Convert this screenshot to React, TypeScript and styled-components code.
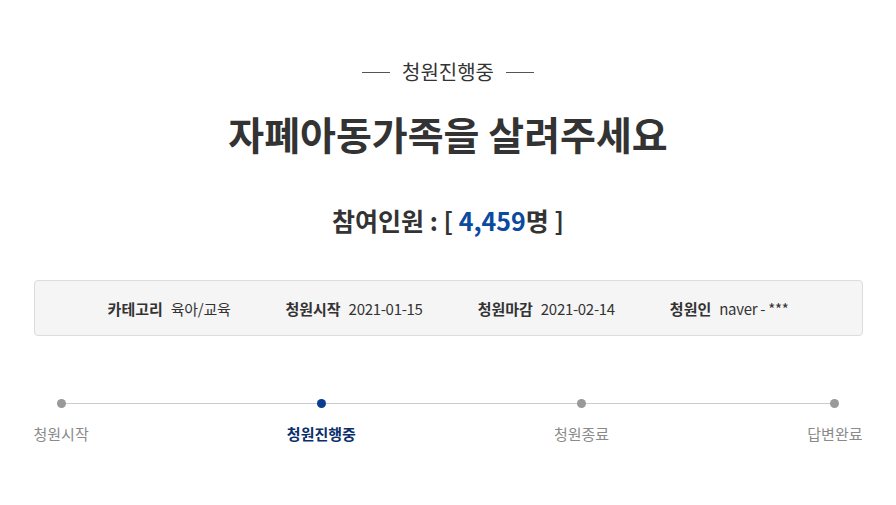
import React from 'react';
import styled, { createGlobalStyle } from 'styled-components';

const GlobalStyle = createGlobalStyle`
  body {
    margin: 0;
    background: #ffffff;
    font-family: "Noto Sans CJK KR", "Noto Sans", sans-serif;
    color: #333333;
  }
`;

const Page = styled.div`
  width: 829px;
  margin: 0 auto;
  padding-top: 58px;
  display: flex;
  flex-direction: column;
  align-items: center;
`;

const Status = styled.div`
  display: flex;
  align-items: center;
  gap: 12px;
  font-size: 20px;
  line-height: 28px;
  color: #333;

  &::before,
  &::after {
    content: '';
    width: 28px;
    height: 1px;
    background: #555;
  }
`;

const Title = styled.h1`
  margin: 22px 0 0;
  font-size: 39px;
  line-height: 50px;
  font-weight: 700;
  color: #333;
`;

const Count = styled.div`
  margin-top: 44px;
  font-size: 25px;
  line-height: 36px;
  font-weight: 700;
  color: #333;
`;

const CountNumber = styled.span`
  color: #0b4a9e;
`;

const InfoBox = styled.div`
  box-sizing: border-box;
  width: 100%;
  height: 56px;
  margin-top: 42px;
  background: #f5f5f5;
  border: 1px solid #dcdcdc;
  border-radius: 4px;
  display: flex;
  align-items: center;
  justify-content: center;
  gap: 55px;
`;

const InfoItem = styled.div`
  display: flex;
  align-items: center;
  gap: 8px;
  font-size: 15px;
  color: #333;
`;

const InfoLabel = styled.span`
  font-weight: 700;
`;

const InfoValue = styled.span`
  font-weight: 400;
  letter-spacing: -0.3px;
`;

const Steps = styled.div`
  position: relative;
  width: 100%;
  margin-top: 63px;
  display: flex;
  justify-content: space-between;

  &::before {
    content: '';
    position: absolute;
    top: 4px;
    left: 27px;
    right: 27px;
    height: 1px;
    background: #cccccc;
  }
`;

const Step = styled.div`
  position: relative;
  display: flex;
  flex-direction: column;
  align-items: center;
  gap: 16px;
`;

const Dot = styled.span<{ $active?: boolean }>`
  width: 9px;
  height: 9px;
  border-radius: 50%;
  background: ${(p) => (p.$active ? '#0b3d91' : '#999999')};
`;

const StepLabel = styled.span<{ $active?: boolean }>`
  font-size: 15px;
  line-height: 20px;
  color: ${(p) => (p.$active ? '#0a2f6b' : '#8a8a8a')};
  font-weight: ${(p) => (p.$active ? 700 : 400)};
`;

const info = [
  { label: '카테고리', value: '육아/교육' },
  { label: '청원시작', value: '2021-01-15' },
  { label: '청원마감', value: '2021-02-14' },
  { label: '청원인', value: 'naver - ***' },
];

const steps = [
  { label: '청원시작', active: false },
  { label: '청원진행중', active: true },
  { label: '청원종료', active: false },
  { label: '답변완료', active: false },
];

const App: React.FC = () => {
  return (
    <>
      <GlobalStyle />
      <Page>
        <Status>청원진행중</Status>
        <Title>자폐아동가족을 살려주세요</Title>
        <Count>
          참여인원 : [ <CountNumber>4,459</CountNumber>명 ]
        </Count>
        <InfoBox>
          {info.map((item) => (
            <InfoItem key={item.label}>
              <InfoLabel>{item.label}</InfoLabel>
              <InfoValue>{item.value}</InfoValue>
            </InfoItem>
          ))}
        </InfoBox>
        <Steps>
          {steps.map((step) => (
            <Step key={step.label}>
              <Dot $active={step.active} />
              <StepLabel $active={step.active}>{step.label}</StepLabel>
            </Step>
          ))}
        </Steps>
      </Page>
    </>
  );
};

export default App;
